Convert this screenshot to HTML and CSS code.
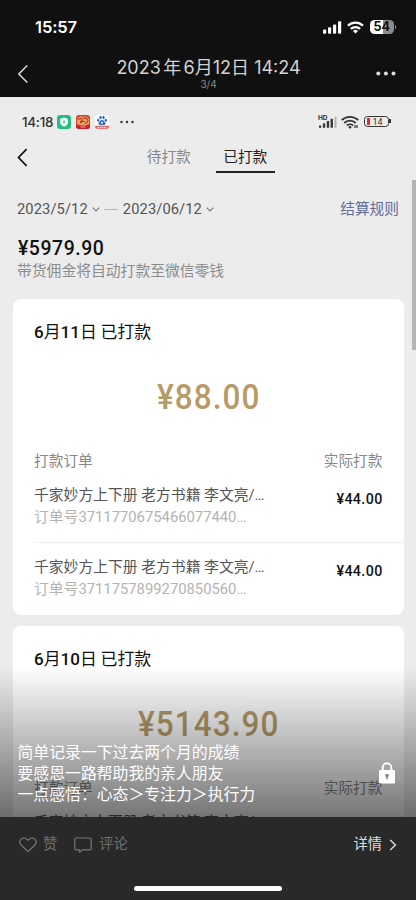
FILE: index.html
```html
<!DOCTYPE html>
<html lang="zh-CN">
<head>
<meta charset="utf-8">
<title>2023年6月12日</title>
<link rel="stylesheet" href="styles.css">
</head>
<body>
<div class="phone">
  <header class="top">
    <div class="ios-status">
      <span class="ios-time">15:57</span>
      <div class="ios-icons">
        <svg width="19" height="13" viewBox="0 0 19 13" fill="#fff"><rect x="0" y="8.6" width="3.2" height="4.2" rx="1"/><rect x="5" y="6.2" width="3.2" height="6.6" rx="1"/><rect x="10" y="3.4" width="3.2" height="9.4" rx="1"/><rect x="15" y="0.3" width="3.2" height="12.5" rx="1"/></svg>
        <svg width="17" height="13" viewBox="0 0 17 13" fill="none" stroke="#fff" stroke-width="2.3"><path d="M1 4.7a10.8 10.8 0 0 1 15 0"/><path d="M3.9 7.9a6.6 6.6 0 0 1 9.2 0"/><path d="M8.5 12.6 6 10.1a3.5 3.5 0 0 1 5 0z" fill="#fff" stroke="none"/></svg>
        <div class="ios-batt"><span>54</span></div>
      </div>
    </div>
    <div class="nav">
      <svg class="nav-back" width="12" height="20" viewBox="0 0 12 20" fill="none" stroke="#ddd" stroke-width="1.5"><path d="M10.3 1.5 1.8 10l8.5 8.5"/></svg>
      <div class="nav-mid">
        <div class="nav-title">2023<i>年</i>6月12日 14:24</div>
        <div class="nav-count">3/4</div>
      </div>
      <svg class="nav-more" width="20" height="5" viewBox="0 0 20 5" fill="#ddd"><circle cx="2.3" cy="2.5" r="2"/><circle cx="9.9" cy="2.5" r="2"/><circle cx="17.5" cy="2.5" r="2"/></svg>
    </div>
  </header>

  <main class="photo">
    <div class="a-status">
      <span class="a-time">14:18</span>
      <svg class="app1" width="14" height="14" viewBox="0 0 14 14"><rect width="14" height="14" rx="3.2" fill="#28bd83"/><path d="M7 2.6 10.8 4v3.2c0 2.1-1.7 3.6-3.8 4.4C4.900 10.800 3.200 9.300 3.200 7.200V4z" fill="#fff"/><path d="M7.500 4.800 5.500 7.500h1.300L6.600 9.300l2-2.800H7.300z" fill="#28bd83"/></svg>
      <svg class="app2" width="14" height="14" viewBox="0 0 14 14"><rect width="14" height="14" rx="3" fill="#d7442c"/><path d="M1 9V4q3-4 6-2 3-2 6 2v5q-6 3-12 0z" fill="#e9a35e"/><path d="M2 4.500q3-2 4 0T4 8M7 3.500q3-1.500 4.500 1T9 8.500M4 6.500h5" fill="none" stroke="#b9302a" stroke-width="1.100"/><path d="M0 10q7 2 14 0v1a3 3 0 0 1-3 3H3a3 3 0 0 1-3-3z" fill="#c8202b"/><path d="M4.500 12h5" stroke="#f0a0a0"/></svg>
      <svg class="app3" width="14" height="14" viewBox="0 0 14 14"><rect width="14" height="14" rx="3" fill="#fff"/><g fill="#366bc4"><ellipse cx="5.500" cy="2.500" rx="1.200" ry="1.700"/><ellipse cx="8.500" cy="2.500" rx="1.200" ry="1.700"/><ellipse cx="3.200" cy="5.300" rx="1.200" ry="1.500"/><ellipse cx="10.800" cy="5.300" rx="1.200" ry="1.500"/><path d="M7 4.700c1.400 0 1.800 1.500 3 2.500 1.200 1.200.5 2.700-1 2.700H5c-1.500 0-2.200-1.500-1-2.700 1.200-1 1.600-2.500 3-2.500z"/></g><circle cx="7" cy="7.700" r="1" fill="#fff"/><path d="M0 10.800h14v.2a3 3 0 0 1-3 3H3a3 3 0 0 1-3-3z" fill="#e86060"/><path d="M2.500 12.600h9" stroke="#fff" stroke-width="1.300" stroke-dasharray="1.500 .7"/></svg>
      <svg class="a-dots" width="14" height="4" viewBox="0 0 14 4" fill="#333"><circle cx="1.500" cy="2" r="1.200"/><circle cx="7" cy="2" r="1.200"/><circle cx="12.500" cy="2" r="1.200"/></svg>
      <div class="a-signal"><span class="hd">HD</span>
        <svg width="18" height="12" viewBox="0 0 18 12" fill="#333"><rect x="0" y="9.400" width="2.300" height="2.400" rx=".5"/><rect x="3.900" y="7.300" width="2.300" height="4.500" rx=".5"/><rect x="7.800" y="5" width="2.300" height="6.800" rx=".5"/><rect x="11.600" y="2.700" width="2.300" height="9.100" rx=".5"/><rect x="15.500" y=".5" width="2" height="11.300" rx=".5" fill="#b3b3b3"/></svg></div>
      <svg class="a-wifi" width="18" height="14" viewBox="0 0 18 14" fill="none" stroke="#333" stroke-width="1.800"><path d="M.7 5.200a12 12 0 0 1 16.600 0"/><path d="M3.300 8a8.200 8.200 0 0 1 11.400 0"/><path d="M5.900 10.500a4.600 4.600 0 0 1 6.200 0"/><circle cx="9" cy="12.200" r="1.300" fill="#333" stroke="none"/><path d="M14 13v-3M16 10v3" stroke-width="1.200"/></svg>
      <div class="a-batt"><b></b><span>14</span></div>
    </div>

    <div class="tabs">
      <svg class="tab-back" width="11" height="19" viewBox="0 0 11 19" fill="none" stroke="#111" stroke-width="1.700"><path d="M9.600 1.200 1.500 9.500l8.100 8.300"/></svg>
      <span class="tab">待打款</span>
      <span class="tab on">已打款</span>
    </div>

    <div class="dates">
      <span class="d1">2023/5/12</span>
      <svg class="chev" width="8" height="5" viewBox="0 0 8 5" fill="none" stroke="#777" stroke-width="1.100"><path d="m.7.700 3.300 3.300L7.300.700"/></svg>
      <i class="dash"></i>
      <span class="d2">2023/06/12</span>
      <svg class="chev" width="8" height="5" viewBox="0 0 8 5" fill="none" stroke="#777" stroke-width="1.100"><path d="m.7.700 3.300 3.300L7.300.700"/></svg>
      <a class="rule">结算规则</a>
    </div>
    <div class="total">¥5979.90</div>
    <div class="hint">带货佣金将自动打款至微信零钱</div>

    <section class="card">
      <h2><b>6</b>月<b>11</b>日 已打款</h2>
      <div class="sum">¥88.00</div>
      <div class="cols"><span>打款订单</span><span>实际打款</span></div>
      <div class="item">
        <div><p class="name">千家妙方上下册 老方书籍 李文亮/…</p><p class="no">订单号<span>3711770675466077440…</span></p></div>
        <span class="price">¥44.00</span>
      </div>
      <div class="item next">
        <div><p class="name">千家妙方上下册 老方书籍 李文亮/…</p><p class="no">订单号<span>3711757899270850560…</span></p></div>
        <span class="price">¥44.00</span>
      </div>
    </section>

    <section class="card">
      <h2><b>6</b>月<b>10</b>日 已打款</h2>
      <div class="sum">¥5143.90</div>
      <div class="cols"><span>打款订单</span><span>实际打款</span></div>
      <div class="item">
        <div><p class="name">千家妙方上下册 老方书籍 李文亮/…</p></div>
      </div>
    </section>

    <div class="scrollbar"></div>
    <div class="shade"></div>
    <div class="caption">
      <p>简单记录一下过去两个月的成绩<br>要感恩一路帮助我的亲人朋友<br>一点感悟：心态＞专注力＞执行力</p>
      <svg width="16" height="22" viewBox="0 0 16 22"><path d="M3.700 9V5.600a4.300 4.300 0 0 1 8.600 0V9" fill="none" stroke="#fff" stroke-width="1.900"/><rect y="8" width="16" height="13.500" rx="1.300" fill="#fff"/><circle cx="8" cy="13.600" r="1.800" fill="#888"/><path d="M8 13.500v4" stroke="#888" stroke-width="1.400"/></svg>
    </div>
  </main>

  <footer class="bottom">
    <div class="actions">
      <svg class="heart" width="18" height="16" viewBox="0 0 18 16" fill="none" stroke="#777" stroke-width="1.200"><path d="M9 14.600 2.200 8A4.200 4.200 0 0 1 2 2.300a4.200 4.200 0 0 1 5.900 0L9 3.400l1.100-1.100a4.200 4.200 0 0 1 5.900 0A4.200 4.200 0 0 1 15.800 8z" stroke-linejoin="round"/></svg>
      <span class="like">赞</span>
      <svg class="bubble" width="18" height="16" viewBox="0 0 18 16" fill="none" stroke="#777" stroke-width="1.200"><path d="M2.200 1h13.600q1.400 0 1.400 1.400v9q0 1.400-1.400 1.400H8.600l-3.100 2.300v-2.300H2.200Q.8 12.800.8 11.400v-9Q.8 1 2.200 1z" stroke-linejoin="round"/></svg>
      <span class="cmt">评论</span>
      <span class="detail">详情</span>
      <svg class="go" width="8" height="12" viewBox="0 0 8 12" fill="none" stroke="#ddd" stroke-width="1.400"><path d="m1.200.900 5.200 5.100-5.200 5.100"/></svg>
    </div>
    <div class="home"></div>
  </footer>
</div>
</body>
</html>
```
FILE: styles.css
```css
* { box-sizing: border-box; margin: 0; padding: 0; }
body { width: 416px; height: 900px; overflow: hidden; background: #292929; font-family: Roboto, "Noto Sans CJK SC", sans-serif; }
i { font-style: normal; }
svg { display: block; flex: none; }
.phone { width: 416px; height: 900px; display: flex; flex-direction: column; white-space: nowrap; }

.top { height: 97px; flex: none; background: #101010; color: #fff; font-family: Inter, "Noto Sans CJK SC", sans-serif; }
.ios-status { height: 54px; padding: 0 22px 0 35px; display: flex; align-items: center; justify-content: space-between; }
.ios-time { font-size: 16.500px; font-weight: 600; letter-spacing: -.1px; }
.ios-icons { display: flex; align-items: center; gap: 5.500px; }
.ios-batt { width: 24.500px; height: 14px; border-radius: 4.500px; background: linear-gradient(90deg, #fff 54%, #8c8c8c 54%); color: #111; font-size: 12.500px; font-weight: 700; line-height: 14px; text-align: center; position: relative; }
.ios-batt::after { content: ""; position: absolute; left: 25.300px; top: 5px; width: 1.500px; height: 4px; border-radius: 0 2px 2px 0; background: #8c8c8c; }
.nav { display: flex; height: 43px; padding: 0 20px 0 17px; }
.nav-back { margin-top: 10px; }
.nav-mid { flex: 1; text-align: center; padding-left: 12px; }
.nav-title { font-size: 18px; line-height: 26px; padding-top: 1px; color: #d2d2d2; }
.nav-title i { margin: 0 2.400px; }
.nav-count { font-size: 10px; line-height: 12px; margin-top: -3px; color: #8a8a8a; }
.nav-more { margin-top: 17px; }

.photo { height: 720px; flex: none; position: relative; overflow: hidden; background: #ececec; }
.a-status { height: 49px; padding: 0 27px 0 22px; display: flex; align-items: center; color: #333; }
.a-time { width: 35px; font: 500 13.500px Inter, sans-serif; letter-spacing: -.3px; }
.app2, .app3 { margin-left: 5px; }
.a-dots { margin-left: 11px; }
.a-signal { margin-left: auto; display: flex; align-items: center; width: 19px; }
.hd { font: 700 6.500px Inter, sans-serif; width: 9px; margin: -8px -8px 0 0; }
.a-wifi { margin-left: 4px; }
.a-batt { width: 25px; height: 11.500px; margin-left: 5px; padding-left: 2px; border: 1.300px solid #333; border-radius: 3.500px; display: flex; align-items: center; position: relative; font-size: 9px; }
.a-batt b { width: 2.500px; height: 6.500px; background: #d93038; margin-right: 3px; }
.a-batt::after { content: ""; position: absolute; left: 24px; top: 2.500px; width: 2px; height: 4px; background: #333; }

.tabs { height: 30px; display: flex; padding-left: 17px; }
.tab-back { margin: 2px 108px 0 0; }
.tab { height: 30px; width: 59.500px; font-size: 14.700px; line-height: 23px; text-align: center; color: #888; }
.tab:nth-child(2) { margin-left: 3px; }
.tab + .tab { margin-left: 17px; }
.tab.on { height: 27px; color: #222; border-bottom: 2px solid #222; }

.dates { height: 30px; margin-top: 18px; padding: 0 17px; display: flex; align-items: center; font-size: 14.700px; color: #555; }
.d1 { letter-spacing: .1px; }
.d2 { letter-spacing: .1px; }
.chev { margin: 1px 0 0 4px; }
.dash { width: 14px; height: 1px; background: #b5b5b5; margin: 0 5px 0 4px; }
.rule { margin: -3px 0 0 auto; font-size: 14.700px; color: #626d9a; }
.total { height: 26px; margin-top: 11px; padding-left: 18px; font-size: 21px; line-height: 27px; font-weight: 500; color: #111; letter-spacing: .6px; transform: scaleX(.925); transform-origin: 18px 50%; }
.hint { height: 22px; padding-left: 17px; font-size: 14.800px; line-height: 20px; color: #8c8c8c; }

.card { width: 390.500px; height: 316px; margin: 16px 0 0 13px; border-radius: 8px; background: #fff; overflow: hidden; }
.card + .card { margin-top: 10.500px; }
.card h2 { height: 65px; padding-left: 21px; font-family: "Noto Sans CJK SC", sans-serif; font-size: 16.900px; line-height: 63px; font-weight: 400; color: #111; }
.card h2 b { font-weight: 500; font-family: Roboto, sans-serif; font-size: 17px; }
.sum { height: 67px; text-align: center; font-size: 35px; line-height: 67px; font-weight: 500; color: #b69b69; letter-spacing: 1.200px; transform: translateX(.5px) scaleX(.9); }
.cols { display: flex; justify-content: space-between; height: 53px; margin: 0 21px; font-size: 14.700px; line-height: 60px; color: #888; }
.item { height: 58px; margin-left: 21px; padding-right: 21px; display: flex; justify-content: space-between; }
.item.next { height: 72px; padding-top: 13px; border-top: 1px solid #eee; }
.name { font-size: 14.800px; line-height: 22px; color: #555; }
.no { font-size: 14.800px; line-height: 22px; color: #b3b3b3; }
.price { padding-top: 5px; font-size: 15px; line-height: 20px; font-weight: 500; color: #111; letter-spacing: .4px; transform: scaleX(.95); transform-origin: 100% 50%; }

.scrollbar { position: absolute; right: 0; top: 83px; width: 4px; height: 170px; background: #b4b4b4; }
.shade { position: absolute; left: 0; right: 0; bottom: 0; height: 150px; background: linear-gradient(rgba(0,0,0,0), rgba(0,0,0,.54)); }
.caption { position: absolute; left: 17.500px; right: 21px; bottom: 13px; display: flex; justify-content: space-between; color: #fff; font-size: 15.850px; line-height: 21px; font-family: "Noto Sans CJK SC", sans-serif; }
.caption svg { margin-top: 21px; }

.bottom { flex: 1; background: #292929; }
.actions { display: flex; align-items: center; height: 55px; padding: 0 19px; font-size: 14.300px; line-height: 20px; color: #707070; }
.actions span { margin-top: -1px; }
.actions .like { margin-right: 17px; margin-left: 6px; }
.actions .cmt { margin-left: 7px; }
.actions .detail { margin-left: auto; color: #ddd; }
.go { margin-left: 7px; }
.home { width: 148px; height: 5.500px; margin: 13.500px auto 0; border-radius: 3px; background: #fff; }
```
